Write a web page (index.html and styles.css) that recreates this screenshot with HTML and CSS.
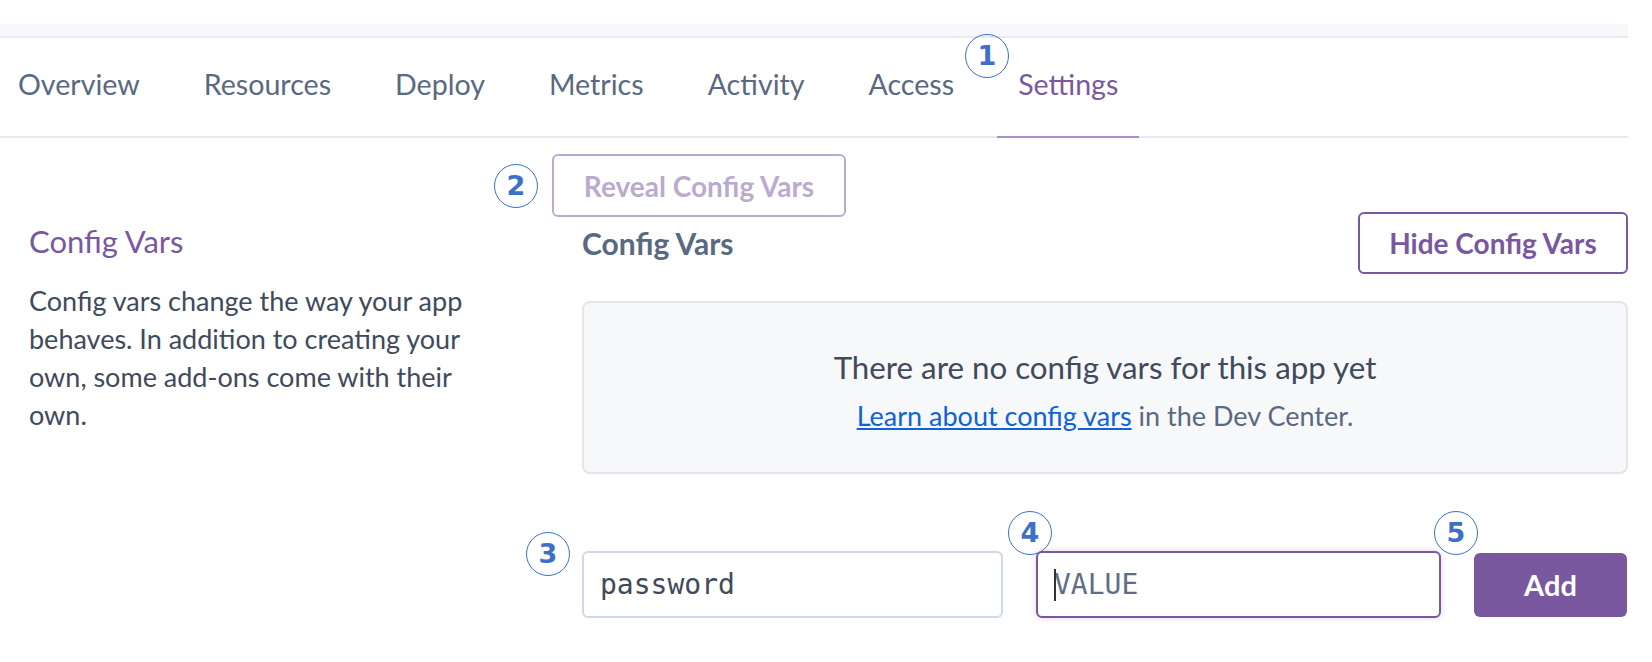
FILE: index.html
```html
<!DOCTYPE html>
<html lang="en">
<head>
<meta charset="utf-8">
<title>Settings</title>
<link rel="stylesheet" href="styles.css">
</head>
<body>
<div class="page">
  <div class="topband"></div>
  <nav class="tabs">
    <a class="tab">Overview</a>
    <a class="tab">Resources</a>
    <a class="tab">Deploy</a>
    <a class="tab">Metrics</a>
    <a class="tab">Activity</a>
    <a class="tab">Access</a>
    <a class="tab active">Settings</a>
  </nav>
  <section class="settings">
    <div class="side">
      <h2 class="side-title">Config Vars</h2>
      <p class="side-text">Config vars change the way your app behaves. In addition to creating your own, some add-ons come with their own.</p>
    </div>
    <div class="main">
      <button class="btn reveal">Reveal Config Vars</button>
      <div class="head-row">
        <h3 class="main-title">Config Vars</h3>
        <button class="btn hide">Hide Config Vars</button>
      </div>
      <div class="empty">
        <div class="empty-title">There are no config vars for this app yet</div>
        <div class="empty-sub"><a href="#">Learn about config vars</a> in the Dev Center.</div>
      </div>
      <div class="add-row">
        <input class="field key" type="text" value="password">
        <span class="value-wrap">
          <input class="field value" type="text" placeholder="VALUE">
          <span class="caret"></span>
        </span>
        <button class="btn add">Add</button>
      </div>
    </div>
  </section>
  <span class="ann a1">1</span>
  <span class="ann a2">2</span>
  <span class="ann a3">3</span>
  <span class="ann a4">4</span>
  <span class="ann a5">5</span>
</div>
</body>
</html>
```

FILE: styles.css
```css
* { box-sizing: border-box; }

body {
  margin: 0;
  background: #fff;
  font-family: Lato, "Open Sans", sans-serif;
  color: #3f4a5c;
}

.page {
  position: relative;
  width: 1628px;
  height: 662px;
}

.topband {
  margin-top: 24px;
  height: 14px;
  background: #f7f8fb;
  border-bottom: 2px solid #e8eaf3;
}

.tabs {
  display: flex;
  gap: 22px;
  height: 100px;
  border-bottom: 2px solid #e8eaf3;
}

.tab {
  display: flex;
  align-items: center;
  padding: 0 21px 6px;
  margin-bottom: -2px;
  border-bottom: 2px solid transparent;
  font-size: 28.6px;
  color: #596981;
  text-decoration: none;
}

.tab:first-child { padding-left: 18px; }

.tab.active {
  color: #79589f;
  border-bottom-color: #a791c4;
}

.settings {
  display: flex;
  padding-left: 29px;
}

.side {
  width: 553px;
  padding-top: 85px;
}

.side-title {
  margin: 0;
  font-size: 31px;
  line-height: 36px;
  font-weight: 400;
  color: #79589f;
}

.side-text {
  margin: 23px 0 0;
  width: 478px;
  font-size: 27px;
  line-height: 38px;
  color: #3f4a5c;
}

.main {
  flex: 1;
  padding-top: 16px;
}

.btn {
  display: block;
  font-family: Lato, "Open Sans", sans-serif;
  font-weight: 700;
  font-size: 28px;
  border: 2px solid #79589f;
  border-radius: 6px;
  background: #fff;
  color: #79589f;
  padding: 0;
}

.reveal {
  width: 294px;
  height: 63px;
  margin-left: -30px;
  opacity: 0.5;
}

.head-row {
  display: flex;
  justify-content: space-between;
  align-items: center;
  margin-top: -5px;
}

.main-title {
  margin: 0;
  font-size: 30px;
  font-weight: 700;
  color: #596981;
}

.hide {
  width: 270px;
  height: 62px;
}

.empty {
  margin-top: 27px;
  height: 173px;
  background: #f7f8fa;
  border: 2px solid #e3e5ea;
  border-radius: 8px;
  padding-top: 44px;
  text-align: center;
}

.empty-title {
  font-size: 31.3px;
  line-height: 40px;
  color: #3f4a5c;
}

.empty-sub {
  margin-top: 13px;
  font-size: 27px;
  line-height: 32px;
  color: #596981;
}

.empty-sub a {
  color: #0f62d8;
  text-decoration: underline;
}

.add-row {
  display: flex;
  align-items: center;
  gap: 33px;
  margin-top: 77px;
}

.field {
  display: block;
  height: 67px;
  border: 2px solid #cfd8e8;
  border-radius: 6px;
  padding: 0 16px;
  font-family: "DejaVu Sans Mono", monospace;
  font-size: 28px;
  color: #3f4a5c;
  background: #fff;
  outline: none;
}

.key { width: 421px; }

.value-wrap {
  position: relative;
  display: block;
  width: 405px;
}

.value {
  width: 100%;
  border-color: #79589f;
  box-shadow: 0 0 6px rgba(121, 88, 159, 0.25);
}

.value::placeholder { color: #5f6e88; }

.caret {
  position: absolute;
  left: 18px;
  top: 18px;
  width: 2px;
  height: 32px;
  background: #333;
}

.add {
  width: 153px;
  height: 64px;
  font-size: 29px;
  background: #79589f;
  color: #fff;
  border: none;
}

.ann {
  position: absolute;
  width: 44px;
  height: 44px;
  border: 1.5px solid #3d70c7;
  border-radius: 50%;
  color: #3d70c7;
  font-family: "DejaVu Sans", sans-serif;
  font-weight: 700;
  font-size: 27px;
  line-height: 42px;
  text-align: center;
}

.a1 { left: 965px; top: 10px; }
.a2 { left: 494px; top: 140px; }
.a3 { left: 526px; top: 508px; }
.a4 { left: 1008px; top: 487px; }
.a5 { left: 1434px; top: 487px; }
```
